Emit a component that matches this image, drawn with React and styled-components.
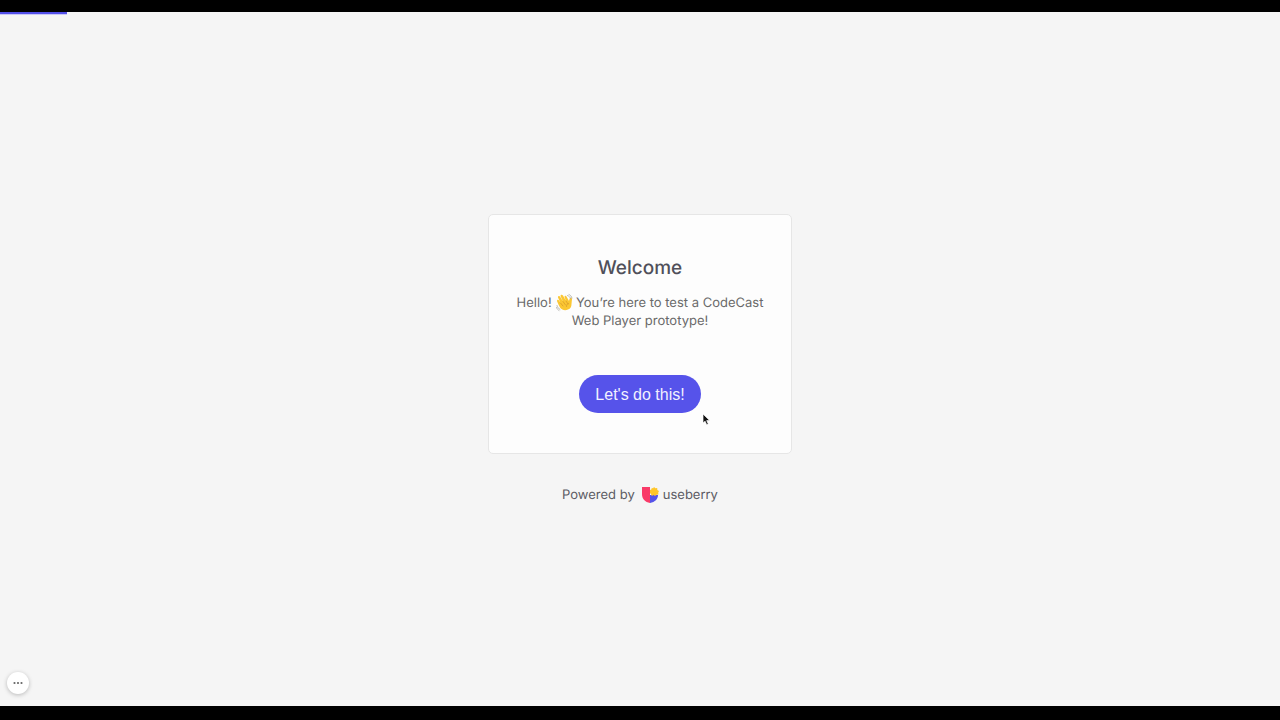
import React from "react";
import styled, { createGlobalStyle } from "styled-components";

const GlobalStyle = createGlobalStyle`
  * {
    box-sizing: border-box;
  }
  body {
    margin: 0;
    background: #f5f5f5;
    font-family: Inter, "Liberation Sans", sans-serif;
    text-rendering: geometricPrecision;
  }
`;

const Page = styled.div`
  min-height: 100vh;
  display: flex;
  flex-direction: column;
  border-top: 12px solid #000;
  border-bottom: 14px solid #000;
`;

const ProgressTrack = styled.div`
  height: 3px;
`;

const ProgressBar = styled.div`
  height: 100%;
  background: #5350e8;
  border-bottom: 1px solid #c9c8f6;
`;

const Main = styled.main`
  flex: 1;
  padding-bottom: 2px;
  display: flex;
  flex-direction: column;
  align-items: center;
  justify-content: center;
  gap: 31px;
`;

const Card = styled.section`
  width: 304px;
  padding: 40px 24px;
  display: flex;
  flex-direction: column;
  align-items: center;
  background: #fdfdfd;
  border: 1px solid #e6e6e6;
  border-radius: 5px;
  text-align: center;
`;

const Title = styled.h1`
  margin: 0 0 13px;
  font-size: 19px;
  line-height: 26px;
  font-weight: 500;
  color: #50505a;
`;

const Message = styled.p`
  margin: 0 0 45px;
  font-size: 13px;
  line-height: 18px;
  color: #6a6a6a;
`;

const WaveIcon = styled.svg`
  width: 17px;
  height: 17px;
  overflow: visible;
  vertical-align: -4px;
`;

const StartButton = styled.button`
  height: 38px;
  padding: 1px 16px 0;
  border: 0;
  border-radius: 19px;
  background: #5653ea;
  color: #f2f1ff;
  font-family: "Liberation Sans", Arial, sans-serif;
  font-size: 16px;
  cursor: pointer;
`;

const Powered = styled.footer`
  display: flex;
  align-items: center;
  gap: 7px;
  font-size: 13px;
  line-height: 20px;
  color: #5c5c64;
`;

const BrandLink = styled.a`
  display: flex;
  align-items: center;
  gap: 4px;
  color: inherit;
  text-decoration: none;
`;

const MenuButton = styled.button`
  position: fixed;
  left: 7px;
  bottom: 26px;
  width: 22px;
  height: 22px;
  padding: 0;
  display: flex;
  align-items: center;
  justify-content: center;
  border: 0;
  border-radius: 50%;
  background: #fff;
  box-shadow: 0 1px 4px rgba(0, 0, 0, 0.25);
`;

const Pointer = styled.svg`
  position: fixed;
  left: calc(50% + 62px);
  top: calc(50% + 53px);
  width: 9px;
  height: 13px;
  pointer-events: none;
`;

const Wave = () => (
  <WaveIcon viewBox="-2 0 34 34" role="img" aria-label="👋">
    <path
      d="M8 27C5 21 3 17 2 14c0-3 3-3 4-1l3 5-5-11c-1-3 3-4 4-2l6 10-5-11c0-3 3-3 5-1l6 11-3-8c0-3 3-3 4-1l5 9 1-4c1-4 5-3 5 0l-1 10c0 6-2 9-7 11-6 3-12 1-16-4z"
      fill="#fbc733"
    />
    <path
      d="M9 18l5 6M14 15l5 7M20 14l4 6M25 19c-3 1-4 3-4 6"
      fill="none"
      stroke="#d79a2c"
      strokeWidth="1.5"
      strokeLinecap="round"
    />
    <path
      d="M23 3c3 1 5 3 6 6M26 1c3 1 5 4 6 7M2 23c1 4 3 6 6 8M1 27c1 3 3 5 5 6"
      fill="none"
      stroke="#aaa9a5"
      strokeWidth="1.6"
      strokeLinecap="round"
    />
  </WaveIcon>
);

const Logo = () => (
  <svg width="17" height="17" viewBox="0 0 17 17" aria-hidden="true">
    <path d="M0 0h8v16C3 15 0 12 0 7z" fill="#f93a68" />
    <path d="M8 8h8c0 4-3 7-8 8z" fill="#5552e9" />
    <path
      d="M12 0l1.4 1.2 1.8-.2.1 1.9L17 4l-.8 1.7.3 1.8-1.9.3L13 9l-1.4-.9L9.8 9l-.7-1.7L8 6V3l1.3-.5.5-1.6 1.4.3z"
      fill="#ffc629"
    />
  </svg>
);

const App = () => {
  const progress = 5.25;

  return (
    <Page>
      <GlobalStyle />
      <ProgressTrack>
        <ProgressBar style={{ width: `${progress}%` }} />
      </ProgressTrack>
      <Main>
        <Card>
          <Title>Welcome</Title>
          <Message>
            Hello! <Wave /> You’re here to test a CodeCast Web Player prototype!
          </Message>
          <StartButton type="button">Let's do this!</StartButton>
        </Card>
        <Powered>
          <span>Powered by</span>
          <BrandLink href="#">
            <Logo />
            useberry
          </BrandLink>
        </Powered>
      </Main>
      <MenuButton type="button" aria-label="More options">
        <svg width="10" height="4" viewBox="0 0 10 4" aria-hidden="true">
          <circle cx="1.5" cy="2" r="1.1" fill="#666" />
          <circle cx="5" cy="2" r="1.1" fill="#666" />
          <circle cx="8.5" cy="2" r="1.1" fill="#666" />
        </svg>
      </MenuButton>
      <Pointer viewBox="0 0 9 13" aria-hidden="true">
        <path
          d="M1 1v9l2.1-1.8 1.6 3.6 1.6-.7-1.6-3.5h3z"
          fill="#111"
          stroke="#fff"
          strokeWidth=".7"
        />
      </Pointer>
    </Page>
  );
};

export default App;
